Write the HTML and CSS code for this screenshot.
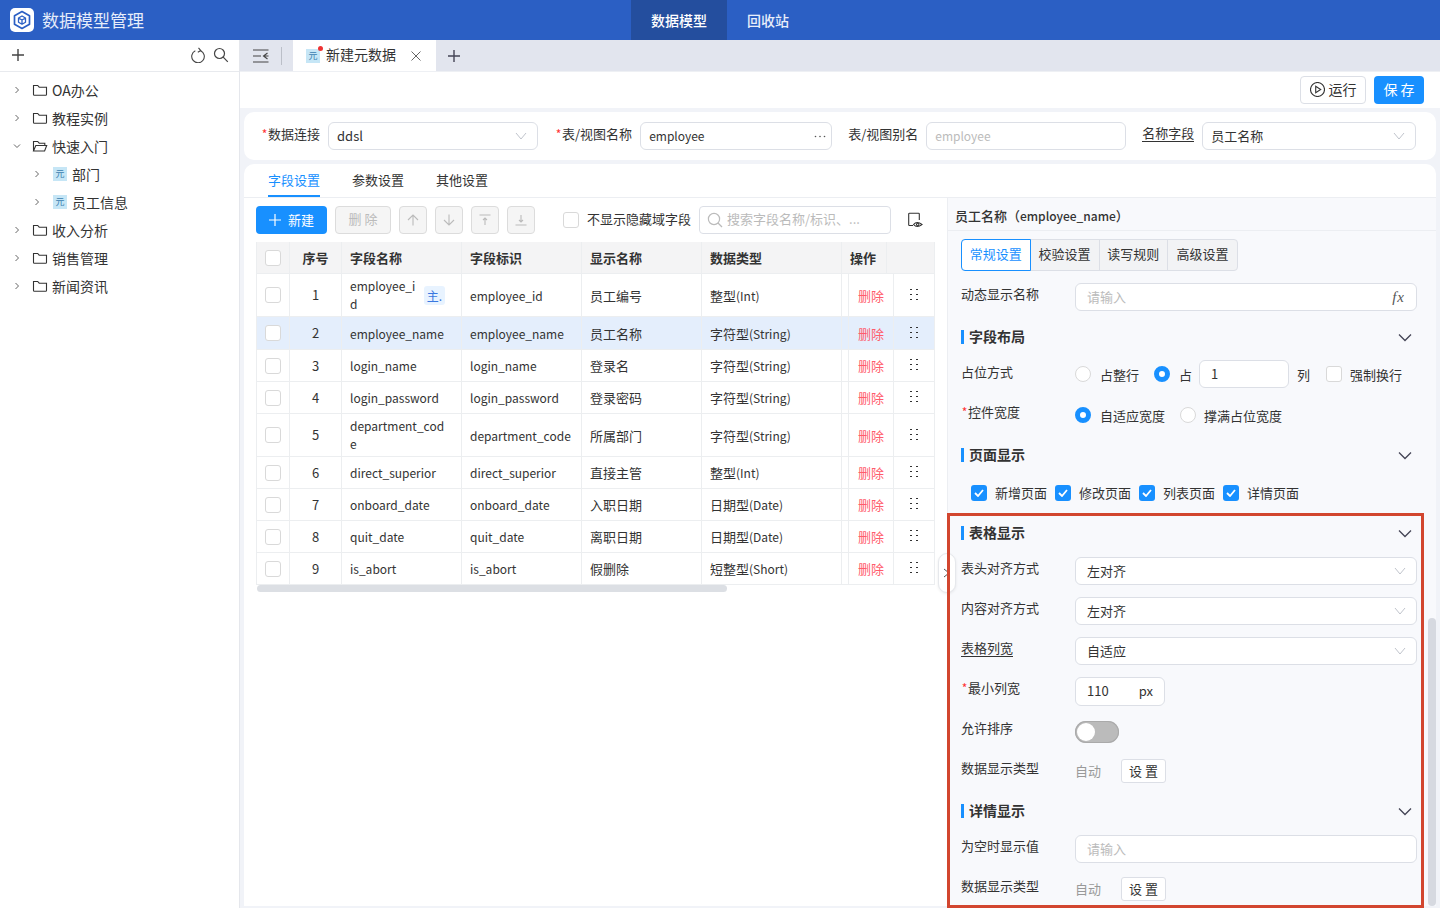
FILE: index.html
```html
<!DOCTYPE html>
<html lang="zh-CN">
<head>
<meta charset="utf-8">
<title>数据模型管理</title>
<link rel="stylesheet" href="styles.css">
</head>
<body>
<header class="top">
  <div class="brand">
    <span class="logo"><svg width="24" height="24" viewBox="0 0 24 24" fill="none" stroke="#2b5fc4" stroke-width="1.7" stroke-linejoin="round"><path d="M12 3.500 19.500 7.700v8.600L12 20.500 4.500 16.300V7.700Z"/><path d="M8.500 10 12 12l3.500-2M12 12v4.200M8.500 10v4.200l3.500 2 3.500-2V10L12 8Z" stroke-width="1.300"/></svg></span>
    <span class="brand-name">数据模型管理</span>
  </div>
  <nav class="nav"><a class="nav-item on">数据模型</a><a class="nav-item">回收站</a></nav>
</header>
<div class="body">
  <aside class="side">
    <div class="side-bar">
      <svg width="14" height="14" viewBox="0 0 14 14" stroke="#444" stroke-width="1.400"><path d="M7 1v12M1 7h12"/></svg>
      <span class="grow"></span>
      <svg width="14" height="16" viewBox="0 0 14 16" fill="none" stroke="#444" stroke-width="1.100"><path d="M4.300 3.800A6.300 6.300 0 1 0 9.500 3.700"/><path d="M7.500 .8 9.800 3.600 6.800 5.300"/></svg>
      <svg width="16" height="16" viewBox="0 0 16 16" fill="none" stroke="#444" stroke-width="1.200"><circle cx="6.500" cy="6.500" r="5"/><path d="m10.200 10.200 4.600 4.600"/></svg>
    </div>
    <ul class="tree">
      <li class="t-row"><svg class="arr" width="8" height="8" viewBox="0 0 8 8"><path d="m2.500 1 3 3-3 3"/></svg><svg class="fold" width="16" height="14" viewBox="0 0 16 14"><path d="M1.500 11.500V2.500h4.200l1.500 1.700h7.300v7.300q0 .8-.8.8H2.300q-.8 0-.8-.8Z"/></svg><span>OA办公</span></li>
      <li class="t-row"><svg class="arr" width="8" height="8" viewBox="0 0 8 8"><path d="m2.500 1 3 3-3 3"/></svg><svg class="fold" width="16" height="14" viewBox="0 0 16 14"><path d="M1.500 11.500V2.500h4.200l1.500 1.700h7.300v7.300q0 .8-.8.8H2.300q-.8 0-.8-.8Z"/></svg><span>教程实例</span></li>
      <li class="t-row"><svg class="arr" width="8" height="8" viewBox="0 0 8 8"><path d="m1 2.500 3 3 3-3"/></svg><svg class="fold" width="16" height="14" viewBox="0 0 16 14"><path d="M1.500 12V2.500h4.200l1.500 1.700h5.600v2.300M1.500 12l2.300-5.500h10.900L12.600 12Z"/></svg><span>快速入门</span></li>
      <li class="t-row sub"><svg class="arr" width="8" height="8" viewBox="0 0 8 8"><path d="m2.500 1 3 3-3 3"/></svg><span class="yuan">元</span><span>部门</span></li>
      <li class="t-row sub"><svg class="arr" width="8" height="8" viewBox="0 0 8 8"><path d="m2.500 1 3 3-3 3"/></svg><span class="yuan">元</span><span>员工信息</span></li>
      <li class="t-row"><svg class="arr" width="8" height="8" viewBox="0 0 8 8"><path d="m2.500 1 3 3-3 3"/></svg><svg class="fold" width="16" height="14" viewBox="0 0 16 14"><path d="M1.500 11.500V2.500h4.200l1.500 1.700h7.300v7.300q0 .8-.8.8H2.300q-.8 0-.8-.8Z"/></svg><span>收入分析</span></li>
      <li class="t-row"><svg class="arr" width="8" height="8" viewBox="0 0 8 8"><path d="m2.500 1 3 3-3 3"/></svg><svg class="fold" width="16" height="14" viewBox="0 0 16 14"><path d="M1.500 11.500V2.500h4.200l1.500 1.700h7.300v7.300q0 .8-.8.8H2.300q-.8 0-.8-.8Z"/></svg><span>销售管理</span></li>
      <li class="t-row"><svg class="arr" width="8" height="8" viewBox="0 0 8 8"><path d="m2.500 1 3 3-3 3"/></svg><svg class="fold" width="16" height="14" viewBox="0 0 16 14"><path d="M1.500 11.500V2.500h4.200l1.500 1.700h7.300v7.300q0 .8-.8.8H2.300q-.8 0-.8-.8Z"/></svg><span>新闻资讯</span></li>
    </ul>
  </aside>
  <main class="main">
    <div class="tabbar">
      <div class="collapse">
        <svg width="16" height="14" viewBox="0 0 16 14" fill="none" stroke="#444" stroke-width="1.100"><path d="M0 1h15.500M0 13h15.500M0 7h8M14.500 4 10.500 7l4 3M10.500 7h5"/></svg>
        <span class="vline"></span>
      </div>
      <div class="tab">
        <span class="yuan big">元<i class="dot"></i></span>
        <span class="tab-t">新建元数据</span>
        <svg width="10" height="10" viewBox="0 0 10 10" stroke="#666" stroke-width="1"><path d="m.5.5 9 9M9.500.5l-9 9"/></svg>
      </div>
      <svg class="tab-add" width="12" height="12" viewBox="0 0 12 12" stroke="#445" stroke-width="1.400"><path d="M6 0v12M0 6h12"/></svg>
    </div>
    <div class="actions">
      <button class="btn run"><svg width="15" height="15" viewBox="0 0 15 15" fill="none" stroke="#333" stroke-width="1.100"><circle cx="7.500" cy="7.500" r="7"/><path d="M5.700 4.300v6.400l5-3.200Z"/></svg>运行</button>
      <button class="btn save">保 存</button>
    </div>
    <section class="formcard">
      <label class="f-l"><i>*</i>数据连接</label>
      <div class="inp w210"><span>ddsl</span><svg class="chev" width="12" height="8" viewBox="0 0 12 8"><path d="m1 1 5 6 5-6"/></svg></div>
      <label class="f-l m17"><i>*</i>表/视图名称</label>
      <div class="inp w192"><span class="en">employee</span><svg class="dots" width="12" height="3" viewBox="0 0 12 3" fill="#555"><circle cx="1.500" cy="1.500" r=".8"/><circle cx="6" cy="1.500" r=".8"/><circle cx="10.500" cy="1.500" r=".8"/></svg></div>
      <label class="f-l m16">表/视图别名</label>
      <div class="inp w200"><span class="ph en">employee</span></div>
      <label class="f-l m16 ul">名称字段</label>
      <div class="inp w214"><span>员工名称</span><svg class="chev" width="12" height="8" viewBox="0 0 12 8"><path d="m1 1 5 6 5-6"/></svg></div>
    </section>
    <section class="card">
      <div class="ctabs"><a class="ctab on">字段设置</a><a class="ctab">参数设置</a><a class="ctab">其他设置</a></div>
      <div class="split">
        <div class="left">
          <div class="tools">
            <button class="b-new"><svg width="12" height="12" viewBox="0 0 12 12" stroke="#fff" stroke-width="1.200"><path d="M6 0v12M0 6h12"/></svg>新建</button>
            <button class="b-del">删 除</button>
            <button class="b-ic"><svg width="12" height="12" viewBox="0 0 12 12" fill="none" stroke="#bbb" stroke-width="1.100"><path d="M6 11.500V1M1 6l5-5 5 5"/></svg></button>
            <button class="b-ic"><svg width="12" height="12" viewBox="0 0 12 12" fill="none" stroke="#bbb" stroke-width="1.100"><path d="M6 .5V11M1 6l5 5 5-5"/></svg></button>
            <button class="b-ic"><svg width="12" height="12" viewBox="0 0 12 12" fill="none" stroke="#bbb" stroke-width="1.100"><path d="M.5 1h11M6 11V4M4 6l2-2 2 2"/></svg></button>
            <button class="b-ic"><svg width="12" height="12" viewBox="0 0 12 12" fill="none" stroke="#bbb" stroke-width="1.100"><path d="M.5 11h11M6 1v7M4 6l2 2 2-2"/></svg></button>
            <span class="cb mg-l"></span><span class="hide-t">不显示隐藏域字段</span>
            <div class="search"><svg width="16" height="16" viewBox="0 0 16 16" fill="none" stroke="#bbb" stroke-width="1.200"><circle cx="7" cy="7" r="5.600"/><path d="m11 11 4 4"/></svg><span class="ph">搜索字段名称/标识、...</span></div>
            <svg class="eye" width="16" height="16" viewBox="0 0 16 16" fill="none" stroke="#333" stroke-width="1.100"><path d="M6 13.500H2.500q-.8 0-.8-.8V2q0-.8.8-.8h9q.8 0 .8.8v6"/><path d="M6.500 12.500q3.500-4 8.500 0-5 4-8.500 0Z"/><circle cx="10.700" cy="12.500" r="1.200"/></svg>
          </div>
          <div class="tbl">
            <div class="tr th"><div class="c"><span class="cb"></span></div><div class="c ctr">序号</div><div class="c">字段名称</div><div class="c">字段标识</div><div class="c">显示名称</div><div class="c">数据类型</div><div class="c op">操作</div><div class="c last"></div></div>
            <div class="tr h43"><div class="c"><span class="cb"></span></div><div class="c ctr">1</div><div class="c name"><span class="wrap en">employee_id</span><span class="pk">主.</span></div><div class="c en">employee_id</div><div class="c">员工编号</div><div class="c">整型<span class="en">(Int)</span></div><div class="c gap"></div><div class="c del">删除</div><div class="c grip"><span class="gr"></span></div></div>
            <div class="tr h33 sel"><div class="c"><span class="cb"></span></div><div class="c ctr">2</div><div class="c en">employee_name</div><div class="c en">employee_name</div><div class="c">员工名称</div><div class="c">字符型<span class="en">(String)</span></div><div class="c gap"></div><div class="c del">删除</div><div class="c grip"><span class="gr"></span></div></div>
            <div class="tr"><div class="c"><span class="cb"></span></div><div class="c ctr">3</div><div class="c en">login_name</div><div class="c en">login_name</div><div class="c">登录名</div><div class="c">字符型<span class="en">(String)</span></div><div class="c gap"></div><div class="c del">删除</div><div class="c grip"><span class="gr"></span></div></div>
            <div class="tr"><div class="c"><span class="cb"></span></div><div class="c ctr">4</div><div class="c en">login_password</div><div class="c en">login_password</div><div class="c">登录密码</div><div class="c">字符型<span class="en">(String)</span></div><div class="c gap"></div><div class="c del">删除</div><div class="c grip"><span class="gr"></span></div></div>
            <div class="tr h43"><div class="c"><span class="cb"></span></div><div class="c ctr">5</div><div class="c"><span class="wrap full en">department_code</span></div><div class="c en">department_code</div><div class="c">所属部门</div><div class="c">字符型<span class="en">(String)</span></div><div class="c gap"></div><div class="c del">删除</div><div class="c grip"><span class="gr"></span></div></div>
            <div class="tr"><div class="c"><span class="cb"></span></div><div class="c ctr">6</div><div class="c en">direct_superior</div><div class="c en">direct_superior</div><div class="c">直接主管</div><div class="c">整型<span class="en">(Int)</span></div><div class="c gap"></div><div class="c del">删除</div><div class="c grip"><span class="gr"></span></div></div>
            <div class="tr"><div class="c"><span class="cb"></span></div><div class="c ctr">7</div><div class="c en">onboard_date</div><div class="c en">onboard_date</div><div class="c">入职日期</div><div class="c">日期型<span class="en">(Date)</span></div><div class="c gap"></div><div class="c del">删除</div><div class="c grip"><span class="gr"></span></div></div>
            <div class="tr"><div class="c"><span class="cb"></span></div><div class="c ctr">8</div><div class="c en">quit_date</div><div class="c en">quit_date</div><div class="c">离职日期</div><div class="c">日期型<span class="en">(Date)</span></div><div class="c gap"></div><div class="c del">删除</div><div class="c grip"><span class="gr"></span></div></div>
            <div class="tr"><div class="c"><span class="cb"></span></div><div class="c ctr">9</div><div class="c en">is_abort</div><div class="c en">is_abort</div><div class="c">假删除</div><div class="c">短整型<span class="en">(Short)</span></div><div class="c gap"></div><div class="c del">删除</div><div class="c grip"><span class="gr"></span></div></div>
          </div>
          <div class="hscroll"><span class="thumb"></span></div>
          <button class="fold-btn"><svg width="8" height="10" viewBox="0 0 8 10" fill="none" stroke="#555" stroke-width="1"><path d="m1 1 5 4-5 4"/></svg></button>
        </div>
        <div class="right">
          <div class="r-title">员工名称（<span class="en">employee_name</span>）</div>
          <div class="r-body">
            <div class="seg"><a class="s on">常规设置</a><a class="s">校验设置</a><a class="s">读写规则</a><a class="s">高级设置</a></div>
            <div class="row r1"><label class="lab">动态显示名称</label><div class="inp grow"><span class="ph">请输入</span><em class="fx">fx</em></div></div>
            <div class="sec s1"><span>字段布局</span><svg class="down" width="14" height="9" viewBox="0 0 14 9"><path d="m1 1.500 6 6 6-6"/></svg></div>
            <div class="row r2"><label class="lab">占位方式</label><div class="ctl"><span class="rd"></span><span class="t w-a">占整行</span><span class="rd on"></span><span class="t w-b">占</span><div class="inp w90"><span>1</span></div><span class="t w-c">列</span><span class="cb"></span><span class="t w-d">强制换行</span></div></div>
            <div class="row r3"><label class="lab"><i>*</i>控件宽度</label><div class="ctl"><span class="rd on"></span><span class="t w-e">自适应宽度</span><span class="rd"></span><span class="t w-d">撑满占位宽度</span></div></div>
            <div class="sec s2"><span>页面显示</span><svg class="down" width="14" height="9" viewBox="0 0 14 9"><path d="m1 1.500 6 6 6-6"/></svg></div>
            <div class="checks">
              <span class="chk"><svg width="10" height="8" viewBox="0 0 10 8" fill="none" stroke="#fff" stroke-width="1.800"><path d="m1 4 3 3 5-6"/></svg></span><span class="t ct">新增页面</span>
              <span class="chk"><svg width="10" height="8" viewBox="0 0 10 8" fill="none" stroke="#fff" stroke-width="1.800"><path d="m1 4 3 3 5-6"/></svg></span><span class="t ct">修改页面</span>
              <span class="chk"><svg width="10" height="8" viewBox="0 0 10 8" fill="none" stroke="#fff" stroke-width="1.800"><path d="m1 4 3 3 5-6"/></svg></span><span class="t ct">列表页面</span>
              <span class="chk"><svg width="10" height="8" viewBox="0 0 10 8" fill="none" stroke="#fff" stroke-width="1.800"><path d="m1 4 3 3 5-6"/></svg></span><span class="t ct">详情页面</span>
            </div>
            <div class="sec s3"><span>表格显示</span><svg class="down" width="14" height="9" viewBox="0 0 14 9"><path d="m1 1.500 6 6 6-6"/></svg></div>
            <div class="row r4"><label class="lab">表头对齐方式</label><div class="inp grow"><span>左对齐</span><svg class="chev" width="12" height="8" viewBox="0 0 12 8"><path d="m1 1 5 6 5-6"/></svg></div></div>
            <div class="row r5"><label class="lab">内容对齐方式</label><div class="inp grow"><span>左对齐</span><svg class="chev" width="12" height="8" viewBox="0 0 12 8"><path d="m1 1 5 6 5-6"/></svg></div></div>
            <div class="row r5"><label class="lab"><b class="ul">表格列宽</b></label><div class="inp grow"><span>自适应</span><svg class="chev" width="12" height="8" viewBox="0 0 12 8"><path d="m1 1 5 6 5-6"/></svg></div></div>
            <div class="row r5 tall"><label class="lab"><i>*</i>最小列宽</label><div class="inp w90 px"><span>110</span><span>px</span></div></div>
            <div class="row r6"><label class="lab">允许排序</label><span class="sw"><span class="knob"></span></span></div>
            <div class="row r7"><label class="lab">数据显示类型</label><span class="auto">自动</span><button class="set">设 置</button></div>
            <div class="sec s4"><span>详情显示</span><svg class="down" width="14" height="9" viewBox="0 0 14 9"><path d="m1 1.500 6 6 6-6"/></svg></div>
            <div class="row r8"><label class="lab">为空时显示值</label><div class="inp grow"><span class="ph">请输入</span></div></div>
            <div class="row r9"><label class="lab">数据显示类型</label><span class="auto">自动</span><button class="set">设 置</button></div>
          </div>
          <span class="vthumb"></span>
        </div>
      </div>
    </section>
  </main>
</div>
<div class="mark"></div>
</body>
</html>
```

FILE: styles.css
```css
*{box-sizing:border-box}
html,body{margin:0;padding:0;height:908px;overflow:hidden}
body{font-family:"Noto Sans CJK SC","Noto Sans",sans-serif;font-size:13px;color:#333;background:#fff;position:relative}
button{font:inherit;cursor:pointer;padding:0;margin:0}
ul{list-style:none;margin:0;padding:0}
i,em{font-style:normal}
.grow{flex:1}
.en,.c.en{font-size:12px}

.top{height:40px;background:#2b5fc4;display:flex;color:#fff}
.brand{width:631px;display:flex;align-items:center;padding-left:10px;gap:8px}
.logo{width:24px;height:24px;border-radius:5px;background:#fff;display:block}
.logo svg{display:block}
.brand-name{font-size:17px;color:#e6edfa;margin-bottom:2px}
.nav{display:flex}
.nav-item{height:40px;line-height:40px;padding:0 20px;font-size:14px;font-weight:500;color:#e8eefa}
.nav-item.on{width:96px;background:#244e9e;text-align:center;padding:0;color:#fff}

.body{display:flex;height:868px}
.side{width:240px;border-right:1px solid #e5e7ec;flex:none}
.side-bar{height:32px;border-bottom:1px solid #e8eaee;display:flex;align-items:center;padding:0 10px 2px 11px;gap:8px}
.tree{padding-top:5px}
.t-row{height:28px;display:flex;align-items:center;padding:0 0 2px 13px;font-size:14px;color:#333}
.t-row.sub{padding-left:33px}
.t-row .arr{fill:none;stroke:#666;stroke-width:1;margin-right:11px}
.t-row.sub .arr{margin-right:12px}
.fold{fill:none;stroke:#333;stroke-width:1.100;margin-right:4px}
.yuan{width:14px;height:14px;background:#c6e6f6;color:#3a80b0;font-size:9px;line-height:14px;text-align:center;margin-right:5px;display:block;position:relative}
.yuan.big{margin-right:6px}
.dot{position:absolute;right:-3px;top:-3px;width:5px;height:5px;border-radius:50%;background:#ee3333}

.main{flex:1;min-width:0;background:#f1f3f8}
.tabbar{height:32px;background:#e2e5ee;border-bottom:1px solid #eef0f4;display:flex;align-items:center}
.collapse{width:53px;display:flex;align-items:center;padding-left:13px;gap:12px}
.vline{width:1px;height:18px;background:#bbbfc8;flex:none}
.tab{width:143px;height:31px;background:#fff;display:flex;align-items:center;padding-left:13px;align-self:flex-start}
.tab-t{font-size:14px;color:#333;margin:0 15px 4px 0}
.tab-add{margin-left:12px}
.actions{height:36px;background:#fff;display:flex;justify-content:flex-end;align-items:center;padding-right:16px;gap:8px}
.btn{height:28px;border-radius:4px;font-size:14px;display:flex;align-items:center;justify-content:center;padding-bottom:2px}
.run{width:66px;background:#fff;border:1px solid #dcdfe6;color:#333;gap:4px}
.save{width:50px;background:#1890ff;border:none;color:#fff}

.formcard{margin:4px 4px 0;height:48px;background:#fff;border-radius:10px;display:flex;align-items:center;padding-left:17px}
.f-l{white-space:nowrap;margin:0 8px 6px 0;color:#333}
.f-l i,.lab i{color:#f33;font-size:12px;display:inline-block;width:7px;text-align:center}
.m17{margin-left:17px}
.m16{margin-left:16px}
.ul{border-bottom:1px solid #333;font-weight:400}
.f-l.ul{line-height:17px}
.inp{height:28px;border:1px solid #dcdfe6;border-radius:6px;background:#fff;display:flex;align-items:center;justify-content:space-between;padding:0 8px;color:#333;font-size:13px}
.inp>span{margin-bottom:2px}
.w210{width:210px}.w192{width:192px}.w200{width:200px}.w214{width:214px}.w90{width:90px}
.ph{color:#bbb}
.chev{fill:none;stroke:#c0c4cc;stroke-width:1;margin-right:2px;flex:none}
.dots{margin-right:-3px;flex:none}

.card{margin:4px 4px 0;height:742px;background:#fff;border-radius:10px 10px 0 0;overflow:hidden;display:flex;flex-direction:column}
.ctabs{height:34px;border-bottom:1px solid #eceef2;display:flex;padding-left:24px;gap:32px;flex:none}
.ctab{height:33px;line-height:31px;font-size:13px;color:#333}
.ctab.on{color:#1890ff;border-bottom:2px solid #1890ff}
.split{display:flex;flex:1;min-height:0}
.left{width:704px;flex:none;padding:8px 12px 0;position:relative;border-right:1px solid #eceef2}
.tools{height:28px;display:flex;align-items:center;gap:8px}
.b-new{width:71px;height:28px;border:none;border-radius:4px;background:#1890ff;color:#fff;display:flex;align-items:center;justify-content:center;gap:7px;font-size:13px;padding-bottom:2px}
.b-new svg{margin-top:2px}
.b-del{width:56px;height:28px;border:1px solid #dcdcdc;border-radius:4px;background:#f5f5f5;color:#bbb;font-size:13px;padding-bottom:3px}
.b-ic{width:28px;height:28px;border:1px solid #dcdcdc;border-radius:4px;background:#f5f5f5;display:flex;align-items:center;justify-content:center}
.cb{width:16px;height:16px;border:1px solid #d9d9d9;border-radius:3px;background:#fff;display:block;flex:none}
.mg-l{margin-left:20px}
.hide-t{margin-bottom:3px}
.search{width:192px;height:28px;border:1px solid #dcdfe6;border-radius:4px;display:flex;align-items:center;padding-left:7px;gap:4px;color:#bbb}
.search .ph{margin-bottom:3px}
.eye{margin-left:8px}

.tbl{margin:8px 0 0;width:679px;border-left:1px solid #eceef0;border-right:1px solid #eceef0}
.tr{display:grid;grid-template-columns:33px 52px 120px 120px 120px 140px 7px 45px 1fr;height:32px;border-bottom:1px solid #eceef0}
.tr.h43{height:43px}
.tr.h33{height:33px}
.th{background:#f4f4f5;font-weight:700;grid-template-columns:33px 52px 120px 120px 120px 140px 45px 1fr}
.c{display:flex;align-items:center;padding-left:8px;border-right:1px solid #eceef0;min-width:0;white-space:nowrap;font-size:13px;color:#333}
.c.ctr{justify-content:center;padding:0 0 1px}
.c.last,.c.grip{border-right:none}
.c.gap{padding:0}
.c.del{color:#ff5c6c;padding-left:9px}
.c.grip{padding-left:14px}
.sel{background:#e4eefc}
.wrap{white-space:normal;word-break:break-all;width:68px;line-height:18px;flex:none}
.wrap.full{width:100px}
.pk{width:21px;height:19px;border-radius:3px;background:#e8f3ff;color:#3a78e0;font-size:12px;line-height:20px;text-align:center;margin-left:6px;flex:none}
.gr{width:12px;height:15px;display:block;background-image:radial-gradient(circle,#333 .8px,transparent 1.100px);background-size:6px 5px;margin-bottom:2px}
.hscroll{height:8px;margin:0 0 0 1px;width:678px}
.thumb{display:block;width:470px;height:7px;border-radius:4px;background:#dcdfe4}
.fold-btn{position:absolute;right:-9px;top:355px;width:18px;height:40px;border:1px solid #e6e8ec;border-radius:9px;background:#fff;display:flex;align-items:center;justify-content:center;z-index:2;box-shadow:0 1px 3px rgba(0,0,0,.08)}

.right{flex:1;background:#f8f9fc;position:relative;min-width:0}
.r-title{height:33px;border-bottom:1px solid #eceef2;line-height:36px;padding-left:7px;font-size:13px;font-weight:500;color:#333}
.r-body{padding:8px 19px 0 13px}
.seg{display:flex;width:277px;height:32px;background:#f2f3f5;border:1px solid #dcdfe6;border-radius:4px}
.s{width:69px;text-align:center;line-height:28px;border-right:1px solid #dcdfe6;color:#333}
.s:last-child{border-right:none}
.s.on{color:#1890ff;background:#fff;border:1px solid #1890ff;margin:-1px 0 -1px -1px;width:70px;height:32px;border-radius:4px 0 0 4px}
.row{display:flex;align-items:center}
.lab{width:114px;flex:none;color:#333;margin-bottom:8px;white-space:nowrap}
.r2 .lab{margin-bottom:6px}
.r6 .lab{margin-bottom:10px}
.lab b{font-weight:400;display:inline-block;line-height:17px}
.r1{margin-top:12px;height:28px}
.sec{display:flex;align-items:center;justify-content:space-between;height:14px;border-left:3px solid #1890ff;padding-left:5px;font-size:14px;font-weight:700;color:#333}
.sec span{line-height:14px;margin-bottom:2px}
.down{fill:none;stroke:#445;stroke-width:1.300;margin-right:5px;flex:none}
.s1{margin-top:19px}
.r2{margin-top:16px;height:28px}
.ctl{display:flex;align-items:center}
.ctl .inp{padding:0 11px}
.rd{width:16px;height:16px;border:1px solid #d9d9d9;border-radius:50%;background:#fff;display:block;flex:none}
.rd.on{border:5px solid #1890ff}
.t{white-space:nowrap;color:#333}
.w-a{margin:0 15px 0 9px}
.w-b{margin:0 7px 0 9px}
.w-c{margin:0 16px 0 8px}
.w-d{margin-left:8px}
.w-e{margin:0 15px 0 9px}
.r3{margin-top:13px;height:28px}
.s2{margin-top:19px}
.checks{display:flex;align-items:center;height:16px;margin-top:23px;padding-left:10px}
.chk{width:16px;height:16px;border-radius:3px;background:#1890ff;display:flex;align-items:center;justify-content:center;flex:none}
.ct{margin:0 8px 2px;width:52px}
.s3{margin-top:25px}
.r4{margin-top:17px;height:28px}
.r5{margin-top:12px;height:28px}
.tall,.tall .inp{height:29px}
.px{padding:0 11px}
.inp.grow{padding:0 10px 0 11px}
.inp.grow .chev{margin-right:0}
.fx{font-family:"Liberation Serif",serif;font-style:italic;font-size:15px;letter-spacing:1px;color:#555;margin-right:1px}
.r6{margin-top:15px;height:22px}
.sw{width:44px;height:22px;border-radius:11px;background:#bbb;display:block;padding:2px;box-shadow:inset 0 0 0 1px #aaa}
.knob{width:18px;height:18px;border-radius:50%;background:#fff;display:block}
.r7{margin-top:16px;height:24px}
.auto{color:#999;width:46px;flex:none;margin-bottom:2px}
.set{width:45px;height:24px;border:1px solid #dcdfe6;border-radius:3px;background:#fff;color:#333;font-size:13px;padding-bottom:2px}
.s4{margin-top:21px}
.r8{margin-top:17px;height:28px}
.r9{margin-top:14px;height:24px}
.vthumb{position:absolute;right:0;top:420px;width:8px;height:288px;background:#d6d9e0;border-radius:4px}

.mark{position:absolute;left:947px;top:513px;width:477px;height:395px;border:3px solid #d2462f;pointer-events:none;z-index:5}
```
